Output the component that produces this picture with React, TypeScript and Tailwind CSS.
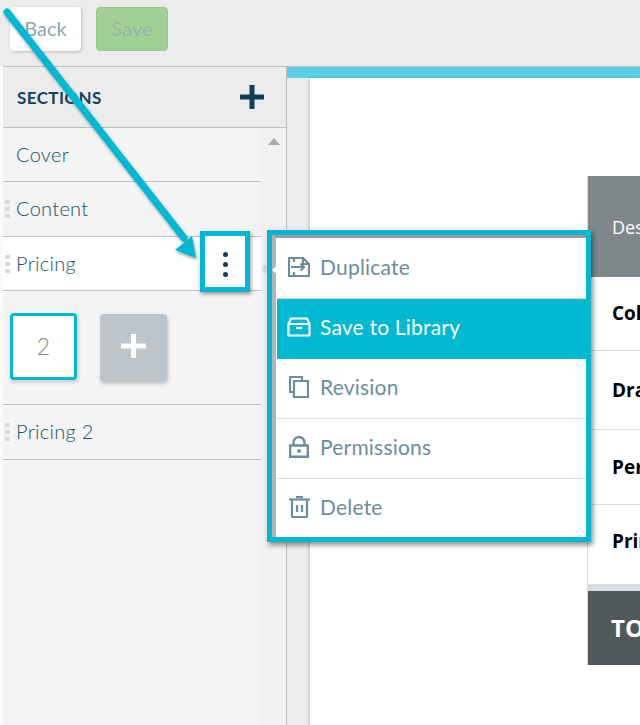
const proxima = "font-['Lato','Liberation_Sans',sans-serif]";

function DuplicateIcon() {
  return (
    <svg width="22" height="20" viewBox="0 0 22 20" fill="none" stroke="#6b8e9a" strokeWidth="2.200">
      <path d="M6 5V1h9l6 6v12H6v-4" />
      <path d="M15 1v6h6" />
      <path d="M6 1H1v18h5" />
      <path d="M3 10h13M12.500 6.500L16 10l-3.500 3.500" />
    </svg>
  );
}

function ArchiveIcon() {
  return (
    <svg width="24" height="20" viewBox="0 0 24 20" fill="none" stroke="#fff" strokeWidth="2.200">
      <path d="M1.500 7L4 1.500h16L22.500 7" />
      <path d="M1.500 7h21v11.500h-21z" strokeLinejoin="round" />
      <path d="M9 11h6" />
    </svg>
  );
}

function RevisionIcon() {
  return (
    <svg width="20" height="22" viewBox="0 0 20 22" fill="none" stroke="#6b8e9a" strokeWidth="2.200">
      <path d="M4 16H1V1h12v4" />
      <path d="M5 5h14v16H5z" />
    </svg>
  );
}

function LockIcon() {
  return (
    <svg width="20" height="22" viewBox="0 0 20 22" fill="none" stroke="#6b8e9a" strokeWidth="2.400">
      <path d="M1.200 9.500h17.600v11.300H1.200z" />
      <path d="M4.500 9.500V6.500a5.500 5.500 0 0 1 11 0v3" />
      <circle cx="10" cy="15" r="2" fill="#6b8e9a" stroke="none" />
    </svg>
  );
}

function TrashIcon() {
  return (
    <svg width="21" height="22" viewBox="0 0 21 22" fill="none" stroke="#6b8e9a" strokeWidth="2.200">
      <path d="M0 3.500h21" />
      <path d="M7 1h7" />
      <path d="M3 4v16a1 1 0 0 0 1 1h13a1 1 0 0 0 1-1V4" />
      <path d="M8 9v7M13 9v7" />
    </svg>
  );
}

function Grip() {
  return (
    <div className="flex flex-col gap-[3px] w-[5px] shrink-0 mr-[6px] ml-[2px]">
      <span className="w-[5px] h-[4px] bg-[#d9d9d9]" />
      <span className="w-[5px] h-[4px] bg-[#d9d9d9]" />
      <span className="w-[5px] h-[4px] bg-[#d9d9d9]" />
    </div>
  );
}

function SectionRow({ label, grip, active, h }: { label: string; grip?: boolean; active?: boolean; h: string }) {
  return (
    <div className={`flex items-center border-b border-[#bdbdbd] ${h} ${active ? "bg-white" : ""}`}>
      {grip ? <Grip /> : <div className="w-[13px]" />}
      <span className="pb-[2px] text-[20px] font-light tracking-[0.3px] text-[#17506a]">{label}</span>
    </div>
  );
}

const menuItems = [
  { label: "Duplicate", icon: <DuplicateIcon />, h: "h-[61px] pb-[2px] border-b border-[#dcdcdc]" },
  { label: "Save to Library", icon: <ArchiveIcon />, h: "h-[60px] pb-[4px] bg-[#00b8d0] text-white" },
  { label: "Revision", icon: <RevisionIcon />, h: "h-[60px] pb-[4px] border-b border-[#dcdcdc]" },
  { label: "Permissions", icon: <LockIcon />, h: "h-[60px] pb-[4px] border-b border-[#dcdcdc]" },
  { label: "Delete", icon: <TrashIcon />, h: "h-[58px] pb-[2px]" },
];

const tableRows = [
  { label: "Color", h: "h-[74px] border-b" },
  { label: "Drawing", h: "h-[79px] border-b" },
  { label: "Permit", h: "h-[75px] border-b" },
  { label: "Printing", h: "h-[79px] pb-[7px]" },
];

export default function App() {
  return (
    <div className={`relative w-[640px] h-[725px] overflow-hidden bg-[#fafafa] ${proxima}`}>
      {/* top bar */}
      <div className="flex items-start gap-[15px] h-[66px] pl-[10px] pt-[7px] bg-[#ececec]">
        <button className="w-[71px] h-[44px] pb-[3px] bg-white rounded-[4px] shadow-[1px_1px_3px_rgba(0,0,0,0.2)] text-[20px] text-[#8fa5b0]">
          Back
        </button>
        <button className="w-[72px] h-[44px] pb-[3px] bg-[#a1d095] border border-[#95c78c] rounded-[4px] text-[20px] text-[#93b5a5]">
          Save
        </button>
      </div>

      <div className="flex h-[659px] ml-[3px] border-t border-[#bdbdbd]">
        {/* sections sidebar */}
        <div className="flex flex-col w-[284px] bg-[#f4f4f4] border-r border-[#bdbdbd] shrink-0">
          <div className="flex items-center justify-between h-[61px] pl-[14px] pr-[22px] bg-[#ececec] border-b border-[#bdbdbd]">
            <span className="pt-[1px] text-[17px] font-bold tracking-[0.4px] text-[#11435a]">SECTIONS</span>
            <svg width="24" height="24" viewBox="0 0 24 24" fill="#0f3f56">
              <path d="M9.500 0h5v9.500H24v5h-9.500V24h-5v-9.500H0v-5h9.500z" />
            </svg>
          </div>
          <div className="flex flex-1">
            <div className="w-[258px] flex flex-col">
              <SectionRow label="Cover" h="h-[54px]" />
              <SectionRow label="Content" grip h="h-[55px]" />
              <SectionRow label="Pricing" grip active h="h-[54px]" />
              <div className="flex gap-[23px] h-[114px] border-b border-[#bdbdbd] pl-[7px] pt-[22px]">
                <div className="flex items-center justify-center w-[67px] h-[67px] bg-white border-[3px] border-[#00b8d0] rounded-[4px] shadow-[1px_2px_4px_rgba(0,0,0,0.2)] text-[23px] font-light text-[#8a8a8a]">
                  2
                </div>
                <div className="flex items-center justify-center w-[67px] h-[68px] mt-[1px] pb-[4px] bg-[#bdc5cb] rounded-[4px] shadow-[1px_2px_4px_rgba(0,0,0,0.2)]">
                  <svg width="25" height="24" viewBox="0 0 25 24" fill="#fff">
                    <path d="M10 0h5v9.500h10v5H15V24h-5v-9.500H0v-5h10z" />
                  </svg>
                </div>
              </div>
              <SectionRow label="Pricing 2" grip h="h-[55px]" />
            </div>
            <div className="flex flex-1 justify-center pt-[10px] bg-[#f1f1f1]">
              <div className="w-0 h-0 border-x-[6px] border-x-transparent border-b-[7px] border-b-[#a9a9a9]" />
            </div>
          </div>
        </div>

        {/* document preview */}
        <div className="flex-1 flex flex-col min-w-0 bg-[#ececec]">
          <div className="h-[11px] bg-[#5dd0e6] shrink-0" />
          <div className="flex-1 ml-[23px] pl-[277px] pt-[98px] bg-white shadow-[-1px_0_3px_rgba(0,0,0,0.2)] font-['Open_Sans',sans-serif]">
            <div className="border-l border-[#d5d9db] overflow-hidden whitespace-nowrap">
              <div className="flex items-center h-[101px] pt-[2px] pl-[24px] bg-[#7f8788] text-[18px] text-white">
                Description
              </div>
              {tableRows.map((row) => (
                <div key={row.label} className={`flex items-center pl-[24px] border-[#dddddd] text-[19px] font-bold text-black ${row.h}`}>
                  {row.label}
                </div>
              ))}
              <div className="h-[7px] bg-[#d7dde0]" />
              <div className="flex items-center h-[74px] pl-[23px] bg-[#50585a] text-[24px] font-bold text-white">
                TOTAL
              </div>
            </div>
          </div>
        </div>
      </div>

      {/* dots button highlight */}
      <div className="absolute left-[200px] top-[231px] flex flex-col items-center justify-center gap-[5px] w-[50px] h-[61px] pt-[6px] bg-white border-[5px] border-[#00b8d4] shadow-[1px_2px_4px_rgba(0,0,0,0.4)]">
        <span className="w-[5px] h-[5px] rounded-full bg-[#0f3f56]" />
        <span className="w-[5px] h-[5px] rounded-full bg-[#0f3f56]" />
        <span className="w-[5px] h-[5px] rounded-full bg-[#0f3f56]" />
      </div>

      {/* popup menu */}
      <div className="absolute left-[267px] top-[230px] w-[324px] h-[312px] border-[5px] border-[#00b8d4] bg-white shadow-[2px_3px_5px_rgba(0,0,0,0.45)]">
        <div className="h-full border-l-[4px] border-t-[3px] border-l-[#b3b3b3] border-t-[#9a9a9a]">
          {menuItems.map((item) => (
            <div
              key={item.label}
              className={`flex items-center gap-[9px] ml-px pl-[10px] text-[21px] tracking-[0.2px] ${item.h} ${item.h.includes("bg-") ? "" : "text-[#6b8e9a]"}`}
            >
              <div className="flex justify-center w-[24px]">{item.icon}</div>
              <span>{item.label}</span>
            </div>
          ))}
        </div>
        <div className="absolute left-[2px] top-[31px] w-[8px] h-[8px] rotate-45 bg-white" />
        <div className="absolute left-[-9px] top-[30px] w-[4px] h-[8px] rounded-full bg-[#d0d0d0]" />
      </div>

      {/* annotation arrow */}
      <svg className="absolute left-0 top-0 pointer-events-none" width="210" height="265" viewBox="0 0 210 265">
        <defs>
          <filter id="s" x="-10%" y="-10%" width="120%" height="120%">
            <feDropShadow dx="1" dy="2" stdDeviation="1.500" floodColor="#000" floodOpacity="0.4" />
          </filter>
        </defs>
        <g filter="url(#s)">
          <path d="M7 12L184 238" stroke="#00b8d4" strokeWidth="7" strokeLinecap="round" />
          <path d="M196 258L175 250 192 236Z" fill="#00b8d4" />
        </g>
      </svg>
    </div>
  );
}
